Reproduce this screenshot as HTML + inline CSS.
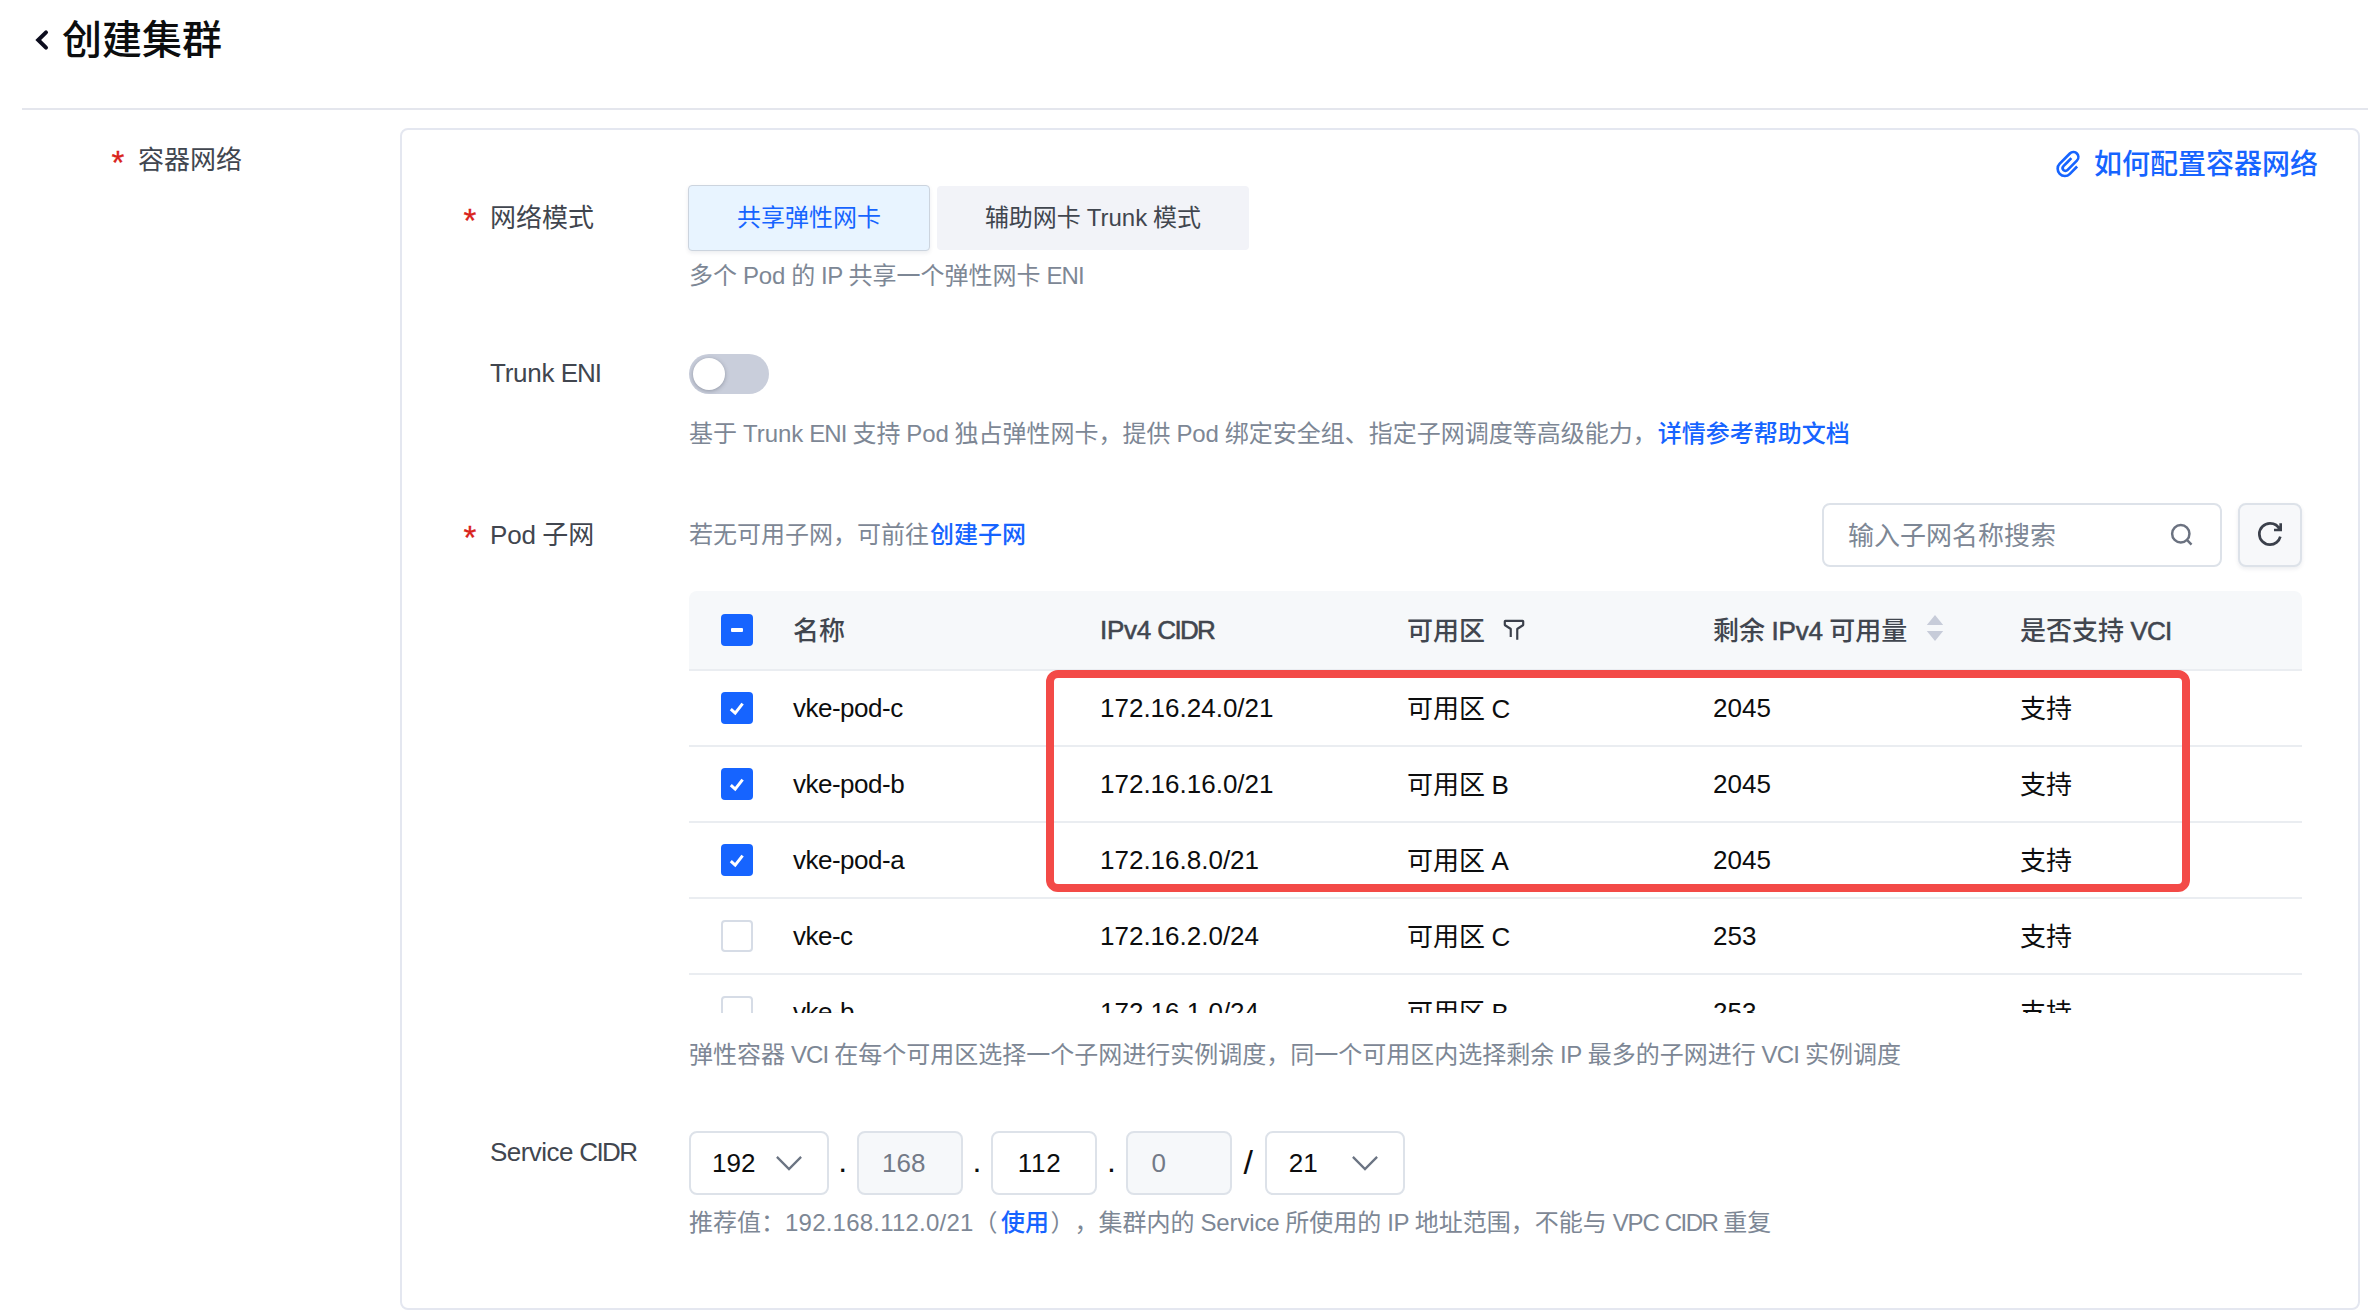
<!DOCTYPE html>
<html lang="zh-CN">
<head>
<meta charset="utf-8">
<title>创建集群</title>
<style>
*{box-sizing:border-box;margin:0;padding:0}
html,body{width:2368px;height:1316px;overflow:hidden;background:#fff}
body{position:relative;font-family:"Liberation Sans","Noto Sans CJK SC",sans-serif;color:#41464f;font-size:26px;line-height:1;word-spacing:-0.03em}
.abs{position:absolute;white-space:nowrap}
.t{position:absolute;white-space:nowrap;transform:translateY(calc(-50% + 1.7px));line-height:1.2}
.req{color:#d9231c;font-weight:400;-webkit-text-stroke:0.3px #d9231c}
.med{-webkit-text-stroke:0.55px currentColor}
.lat{margin-top:-1px}
body{text-spacing-trim:space-all}
.blue{color:#1664ff}
.help{color:#7d8795;font-size:24px}
a{color:#1664ff;text-decoration:none;font-weight:500}

/* header */
#title{left:62px;top:38px;font-size:40px;font-weight:500;color:#0c0d0e}
#hr{left:22px;top:108px;width:2346px;height:2px;background:#e4e6ed}

/* card */
#card{left:400px;top:128px;width:1960px;height:1182px;border:2px solid #e4e7f0;border-radius:8px;background:#fff}

/* radio buttons */
.rb{position:absolute;top:186px;height:64px;border-radius:4px;font-size:24px;text-align:center;line-height:64.5px}
#rb1{left:688px;width:242px;top:185px;height:66px;line-height:64.5px;background:#e8f4ff;border:1px solid #ccd4de;color:#1664ff;box-shadow:0 2px 4px rgba(10,30,60,.08)}
#rb2{left:937px;width:312px;background:#f2f3f8;color:#41464f}

/* switch */
#sw{left:689px;top:354px;width:80px;height:40px;border-radius:20px;background:#c9cedb;overflow:hidden}
#sw i{position:absolute;left:4px;top:4px;width:32px;height:32px;border-radius:50%;background:#fff;box-shadow:0 1px 4px rgba(55,60,75,.38)}

/* search */
#search{left:1822px;top:503px;width:400px;height:64px;border:2px solid #dde2e9;border-radius:8px;background:#fff}
#search span{position:absolute;left:24px;top:50%;transform:translateY(calc(-50% + 1.6px));color:#7d8795;font-size:26px;line-height:1.2}
#refresh{left:2238px;top:503px;width:64px;height:64px;border:2px solid #dde2e9;border-radius:8px;background:#f7f8fa;box-shadow:0 2px 4px rgba(0,20,60,.08)}

/* table */
#tbl{left:689px;top:591px;width:1613px;height:422px;overflow:hidden}
#thead{position:absolute;left:0;top:0;width:1613px;height:80px;background:#f6f8fa;border-bottom:2px solid #eaedf1;border-radius:8px 8px 0 0;font-weight:500;color:#41464f}
.row{position:absolute;left:0;width:1613px;height:76px;border-bottom:2px solid #eaedf1;color:#0c0d0e}
.c{position:absolute;top:37px;transform:translateY(calc(-50% + 1.7px));white-space:nowrap;line-height:1.2}
#thead .c{top:39px}
#thead .cb{top:23px}
.c1{left:104px}.c2{left:411px}.c3{left:718px}.c4{left:1024px}.c5{left:1331px}
.cb{position:absolute;left:32px;top:21px;width:32px;height:32px;border-radius:4px;background:#1664ff}
.cb.off{background:#fff;border:2px solid #d6dce6}
.cb svg{position:absolute;left:0;top:0}

/* annotation */
#anno{left:1046px;top:670px;width:1144px;height:222px;border:8px solid #f34a47;border-radius:12px}

/* service cidr */
.inp{position:absolute;top:1131px;height:64px;border:2px solid #dde2e9;border-radius:8px;background:#fff;color:#0c0d0e;font-size:26px}
.inp.dis{background:#f6f8fa;color:#737a87}
.inp span{position:absolute;top:50%;transform:translateY(calc(-50% + 1px));line-height:1.2}
.inp svg{position:absolute}
.sep{position:absolute;color:#0c0d0e;font-size:32px;transform:translateY(-50%);line-height:1.2}
</style>
</head>
<body>

<!-- page header -->
<svg class="abs" style="left:34px;top:28px" width="16" height="24" viewBox="0 0 16 24"><path d="M12 4.3 L4.2 12 L12 19.7" fill="none" stroke="#0c0d1e" stroke-width="4" stroke-linecap="round" stroke-linejoin="miter"/></svg>
<div class="t" id="title">创建集群</div>
<div class="abs" id="hr"></div>

<!-- left label -->
<div class="t req" style="left:111.6px;top:160.7px;font-size:33px">*</div>
<div class="t" style="left:138px;top:159px">容器网络</div>

<!-- card -->
<div class="abs" id="card"></div>

<!-- top-right link -->
<svg class="abs" style="left:2052px;top:148px" width="32" height="32" viewBox="0 0 48 48"><path d="M29.037 15.236s-9.174 9.267-11.48 11.594c-2.305 2.327-1.646 4.987-.329 6.316 1.317 1.33 3.994 1.953 6.258-.332L37.32 18.851c3.623-3.657 2.092-8.492 0-10.639-2.093-2.147-6.916-3.657-10.54 0L11.3 23.838c-3.623 3.657-3.953 10.638.329 14.96 4.282 4.322 11.115 4.105 14.821.333 3.706-3.773 8.74-8.822 11.224-11.33" fill="none" stroke="#1664ff" stroke-width="4"/></svg>
<a class="t" style="left:2094px;top:163px;font-size:28px">如何配置容器网络</a>

<!-- row: network mode -->
<div class="t req" style="left:463.6px;top:219.2px;font-size:33px">*</div>
<div class="t" style="left:490px;top:217px">网络模式</div>
<div class="rb" id="rb1">共享弹性网卡</div>
<div class="rb" id="rb2">辅助网卡 Trunk 模式</div>
<div class="t help" id="hA" style="left:689px;top:275px">多个 <span style="letter-spacing:-0.11px">Pod</span> 的 <span style="letter-spacing:-0.5px">IP</span> 共享一个弹性网卡 <span style="letter-spacing:-0.91px">ENI</span></div>

<!-- row: trunk eni -->
<div class="t lat" style="left:490px;top:373px"><span style="letter-spacing:-0.25px">Trunk</span> <span style="letter-spacing:-0.98px">ENI</span></div>
<div class="abs" id="sw"><i></i></div>
<div class="t help" id="hB" style="left:689px;top:433px">基于 Trunk <span style="letter-spacing:-0.91px">ENI</span> 支持 <span style="letter-spacing:-0.11px">Pod</span> 独占弹性网卡，提供 <span style="letter-spacing:-0.11px">Pod</span> 绑定安全组、指定子网调度等高级能力，<a style="margin-left:1px">详情参考帮助文档</a></div>

<!-- row: pod subnet -->
<div class="t req" style="left:463.6px;top:536.3px;font-size:33px">*</div>
<div class="t" style="left:490px;top:534px"><span style="letter-spacing:-0.12px">Pod</span> 子网</div>
<div class="t help" id="hE" style="left:689px;top:534px">若无可用子网，可前往<a style="margin-left:1px">创建子网</a></div>
<div class="abs" id="search"><span>输入子网名称搜索</span>
<svg style="position:absolute;left:345px;top:17px" width="26" height="26" viewBox="0 0 48 48"><path d="M33.072 33.071c6.248-6.248 6.248-16.379 0-22.627-6.249-6.249-16.38-6.249-22.628 0-6.248 6.248-6.248 16.379 0 22.627 6.248 6.248 16.38 6.248 22.628 0Zm0 0 8.485 8.485" fill="none" stroke="#6b7280" stroke-width="4.6"/></svg></div>
<div class="abs" id="refresh"><svg style="position:absolute;left:14px;top:13px" width="32" height="32" viewBox="0 0 48 48"><path d="M38.837 18C36.463 12.136 30.715 8 24 8 15.163 8 8 15.163 8 24s7.163 16 16 16c7.455 0 13.72-5.1 15.496-12M40 8v10H30" fill="none" stroke="#3b404b" stroke-width="4"/></svg></div>

<!-- table -->
<div class="abs" id="tbl">
 <div id="thead">
  <div class="cb"><svg width="32" height="32"><rect x="10" y="14" width="12" height="4" rx="1" fill="#fff"/></svg></div>
  <div class="c c1">名称</div>
  <div class="c c2 med lat"><span style="letter-spacing:-0.3px">IPv4</span> <span style="letter-spacing:-1.65px">CIDR</span></div>
  <div class="c c3">可用区</div>
  <svg style="position:absolute;left:812px;top:26px" width="26" height="26" viewBox="0 0 48 48"><path d="M30 42V22.549a1 1 0 0 1 .463-.844l10.074-6.41A1 1 0 0 0 41 14.451V8a1 1 0 0 0-1-1H8a1 1 0 0 0-1 1v6.451a1 1 0 0 0 .463.844l10.074 6.41a1 1 0 0 1 .463.844V37" fill="none" stroke="#3b404b" stroke-width="4"/></svg>
  <div class="c c4">剩余 <span class="med" style="letter-spacing:-0.15px">IPv4</span> 可用量</div>
  <svg style="position:absolute;left:1236px;top:22px" width="20" height="30" viewBox="0 0 20 30"><path d="M10 2 L18.2 12 H1.8 Z M1.8 18 H18.2 L10 28 Z" fill="#c7ccd9"/></svg>
  <div class="c c5">是否支持 <span class="med" style="letter-spacing:-0.75px">VCI</span></div>
 </div>
 <div class="row" style="top:80px"><div class="cb"><svg width="32" height="32"><path d="M9.8 17.1 L14.2 21.1 L21.6 11.6" fill="none" stroke="#fff" stroke-width="3"/></svg></div><div class="c c1 lat" style="letter-spacing:-0.5px">vke-pod-c</div><div class="c c2 lat">172.16.24.0/21</div><div class="c c3">可用区 C</div><div class="c c4 lat">2045</div><div class="c c5">支持</div></div>
 <div class="row" style="top:156px"><div class="cb"><svg width="32" height="32"><path d="M9.8 17.1 L14.2 21.1 L21.6 11.6" fill="none" stroke="#fff" stroke-width="3"/></svg></div><div class="c c1 lat" style="letter-spacing:-0.5px">vke-pod-b</div><div class="c c2 lat">172.16.16.0/21</div><div class="c c3">可用区 B</div><div class="c c4 lat">2045</div><div class="c c5">支持</div></div>
 <div class="row" style="top:232px"><div class="cb"><svg width="32" height="32"><path d="M9.8 17.1 L14.2 21.1 L21.6 11.6" fill="none" stroke="#fff" stroke-width="3"/></svg></div><div class="c c1 lat" style="letter-spacing:-0.5px">vke-pod-a</div><div class="c c2 lat">172.16.8.0/21</div><div class="c c3">可用区 A</div><div class="c c4 lat">2045</div><div class="c c5">支持</div></div>
 <div class="row" style="top:308px"><div class="cb off"></div><div class="c c1 lat" style="letter-spacing:-0.5px">vke-c</div><div class="c c2 lat">172.16.2.0/24</div><div class="c c3">可用区 C</div><div class="c c4 lat">253</div><div class="c c5">支持</div></div>
 <div class="row" style="top:384px"><div class="cb off"></div><div class="c c1 lat" style="letter-spacing:-0.5px">vke-b</div><div class="c c2 lat">172.16.1.0/24</div><div class="c c3">可用区 B</div><div class="c c4 lat">253</div><div class="c c5">支持</div></div>
</div>
<div class="abs" id="anno"></div>
<div class="t help" id="hC" style="left:689px;top:1054px">弹性容器 <span style="letter-spacing:-0.86px">VCI</span> 在每个可用区选择一个子网进行实例调度，同一个可用区内选择剩余 <span style="letter-spacing:-0.5px">IP</span> 最多的子网进行 <span style="letter-spacing:-0.86px">VCI</span> 实例调度</div>

<!-- row: service cidr -->
<div class="t lat" style="left:490px;top:1152px"><span style="letter-spacing:-0.55px">Service</span> <span style="letter-spacing:-1.6px">CIDR</span></div>
<div class="inp" style="left:689px;width:140px"><span style="left:21px">192</span><svg style="left:84px;top:21px" width="28" height="18" viewBox="0 0 28 18"><path d="M1.9 2.9 L14 15 L26.1 2.9" fill="none" stroke="#6b7483" stroke-width="2.3"/></svg></div>
<div class="sep" style="left:838.3px;top:1160.7px">.</div>
<div class="inp dis" style="left:857px;width:106px"><span style="left:23px">168</span></div>
<div class="sep" style="left:972.6px;top:1160.7px">.</div>
<div class="inp" style="left:991px;width:106px"><span style="left:24.7px;letter-spacing:0.8px">112</span></div>
<div class="sep" style="left:1107px;top:1160.7px">.</div>
<div class="inp dis" style="left:1126px;width:106px"><span style="left:23.5px">0</span></div>
<div class="sep" style="left:1243.5px;top:1162px;font-size:34px">/</div>
<div class="inp" style="left:1265px;width:140px"><span style="left:21.8px">21</span><svg style="left:84px;top:21px" width="28" height="18" viewBox="0 0 28 18"><path d="M1.9 2.9 L14 15 L26.1 2.9" fill="none" stroke="#6b7483" stroke-width="2.3"/></svg></div>
<div class="t help" id="hD" style="left:689px;top:1222px">推荐值：<span style="letter-spacing:0.22px">192.168.112.0/21</span>（<a style="margin:0 1.5px 0 3.5px">使用</a>），集群内的 <span style="letter-spacing:-0.15px">Service</span> 所使用的 <span style="letter-spacing:-0.5px">IP</span> 地址范围，不能与 <span style="letter-spacing:-1.11px">VPC</span> <span style="letter-spacing:-1.5px">CIDR</span> 重复</div>

</body>
</html>
